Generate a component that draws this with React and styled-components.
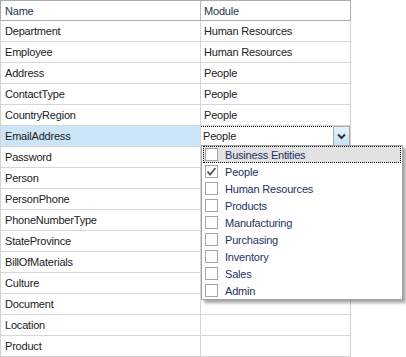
import React from 'react';
import styled, { createGlobalStyle } from 'styled-components';

const GlobalStyle = createGlobalStyle`
    body {
        margin: 0;
        background: #fff;
        font-family: "Liberation Sans", Arial, sans-serif;
        font-size: 11px;
    }
`

const Page = styled.div`
    position: relative;
    width: 406px;
    height: 357px;
    overflow: hidden;
`

const Grid = styled.div`
    width: 351px;
    display: flex;
    flex-direction: column;
`

const Row = styled.div`
    display: grid;
    grid-template-columns: 200px 150px;
    height: 21px;
    box-sizing: border-box;
    border-left: 1px solid ${p => p.header ? '#ababab' : '#d2d2d2'};
    border-top: ${p => p.header ? '1px solid #ababab' : 'none'};
    border-bottom: 1px solid ${p => p.header ? '#ababab' : '#d6d6d6'};
`

const Cell = styled.div`
    box-sizing: border-box;
    border-right: 1px solid ${p => p.header ? '#b8b8b8' : '#d6d6d6'};
    padding-left: ${p => p.first ? '4px' : '3px'};
    display: flex;
    align-items: center;
    color: ${p => p.header ? '#25334d' : '#222'};
    background: ${p => p.selected ? '#cce4f7' : 'transparent'};
    letter-spacing: -0.2px;
    white-space: nowrap;
    overflow: hidden;
    &:last-child {
        border-right-color: ${p => p.header ? '#ababab' : '#d2d2d2'};
    }
`

const Editor = styled.div`
    flex: 1;
    height: 100%;
    display: flex;
    align-items: stretch;
    margin-left: -4px;
    box-sizing: border-box;
    border: 1px dotted #000;
    border-right: none;
`

const EditorText = styled.div`
    flex: 1;
    display: flex;
    align-items: center;
    padding-left: 2px;
    color: #222;
`

const DropButton = styled.div`
    width: 17px;
    box-sizing: border-box;
    margin-top: -1px;
    margin-bottom: -1px;
    border: 1px solid #a8a8a8;
    background: linear-gradient(#e4f1fc, #c9e2f8);
    display: flex;
    align-items: center;
    justify-content: center;
`

const Popup = styled.div`
    position: absolute;
    left: 201px;
    top: 145px;
    width: 202px;
    box-sizing: border-box;
    border: 1px solid #a3a3a3;
    background: #fff;
    box-shadow: 3px 3px 3px rgba(0, 0, 0, 0.35);
    display: flex;
    flex-direction: column;
`

const Item = styled.div`
    height: 17px;
    box-sizing: border-box;
    display: flex;
    align-items: center;
    gap: 7px;
    padding-left: 1px;
    margin: 0 1px;
    background: ${p => p.focused ? '#e2e2e2' : 'transparent'};
    border: 1px dotted ${p => p.focused ? '#000' : 'transparent'};
    color: #1c3262;
    letter-spacing: -0.2px;
`

const Check = styled.div`
    width: 13px;
    height: 13px;
    box-sizing: border-box;
    border: 1px solid #a6a6a6;
    background: #fff;
    display: flex;
    align-items: center;
    justify-content: center;
`

const rows = [
    ['Department', 'Human Resources'],
    ['Employee', 'Human Resources'],
    ['Address', 'People'],
    ['ContactType', 'People'],
    ['CountryRegion', 'People'],
    ['EmailAddress', 'People', true],
    ['Password', ''],
    ['Person', ''],
    ['PersonPhone', ''],
    ['PhoneNumberType', ''],
    ['StateProvince', ''],
    ['BillOfMaterials', ''],
    ['Culture', ''],
    ['Document', ''],
    ['Location', ''],
    ['Product', ''],
]

const modules = ['Business Entities', 'People', 'Human Resources', 'Products', 'Manufacturing', 'Purchasing', 'Inventory', 'Sales', 'Admin']

export default function App() {
    return (
        <Page>
            <GlobalStyle />
            <Grid>
                <Row header>
                    <Cell header first>Name</Cell>
                    <Cell header>Module</Cell>
                </Row>
                {rows.map(([name, mod, selected]) => (
                    <Row key={name}>
                        <Cell first selected={selected}>{name}</Cell>
                        <Cell>
                            {selected ? (
                                <Editor>
                                    <EditorText>{mod}</EditorText>
                                    <DropButton>
                                        <svg width="9" height="7" viewBox="0 0 9 7">
                                            <path d="M1 1.5 L4.5 5 L8 1.5" fill="none" stroke="#333" strokeWidth="2" />
                                        </svg>
                                    </DropButton>
                                </Editor>
                            ) : mod}
                        </Cell>
                    </Row>
                ))}
            </Grid>
            <Popup>
                {modules.map((m, i) => (
                    <Item key={m} focused={i === 0}>
                        <Check>
                            {m === 'People' && (
                                <svg width="11" height="11" viewBox="0 0 11 11">
                                    <path d="M1.5 5.5 L4 8.5 L9.5 2" fill="none" stroke="#555" strokeWidth="1.8" />
                                </svg>
                            )}
                        </Check>
                        {m}
                    </Item>
                ))}
            </Popup>
        </Page>
    );
}
